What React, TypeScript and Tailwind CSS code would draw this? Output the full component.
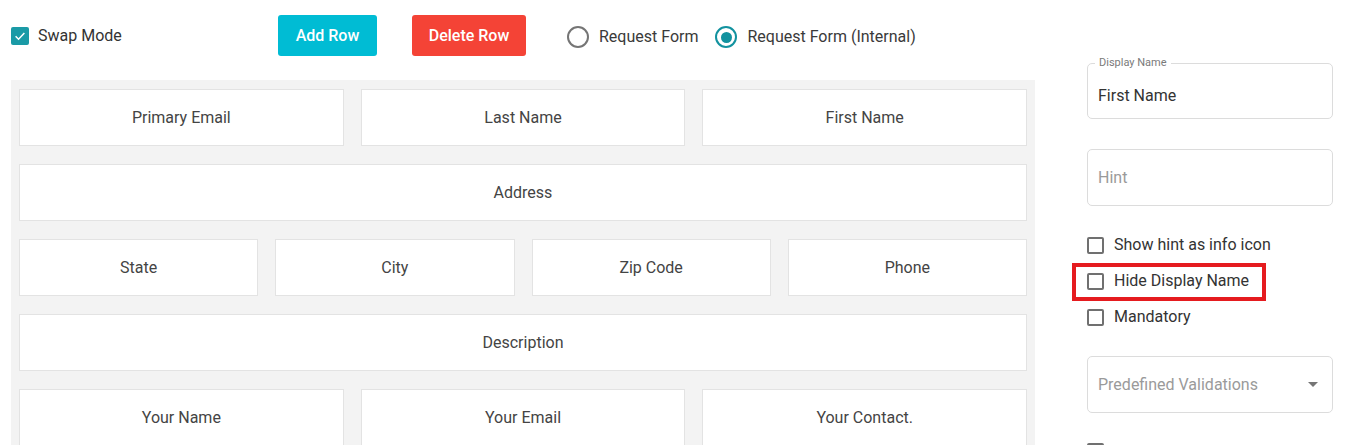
import React from "react";

const rows: string[][] = [
  ["Primary Email", "Last Name", "First Name"],
  ["Address"],
  ["State", "City", "Zip Code", "Phone"],
  ["Description"],
  ["Your Name", "Your Email", "Your Contact."],
];

function Box({ checked = false }: { checked?: boolean }) {
  if (checked) {
    return (
      <span className="flex h-[18px] w-[18px] items-center justify-center rounded-[2px] bg-[#1a9aa6]">
        <svg width="14" height="14" viewBox="0 0 24 24" fill="none" stroke="#fff" strokeWidth="2.6">
          <path d="M4.5 12.5l5 5L19.5 7" />
        </svg>
      </span>
    );
  }
  return <span className="h-[17px] w-[17px] shrink-0 rounded-[2px] border-2 border-[#707070] bg-white" />;
}

function Radio({ checked = false, label }: { checked?: boolean; label: string }) {
  return (
    <label className="flex items-center gap-[10px]">
      <span
        className={
          "flex h-[22px] w-[22px] items-center justify-center rounded-full border-2 " +
          (checked ? "border-[#12929f]" : "border-[#757575]")
        }
      >
        {checked && <span className="h-[11px] w-[11px] rounded-full bg-[#12929f]" />}
      </span>
      <span className="text-[16px] text-[#3a3a3a]">{label}</span>
    </label>
  );
}

function CheckRow({ label }: { label: string }) {
  return (
    <div className="flex h-[36px] shrink-0 items-center gap-[10px]">
      <Box />
      <span className="text-[16px] text-[#333]">{label}</span>
    </div>
  );
}

export default function App() {
  return (
    <div
      className="flex h-[445px] w-full overflow-hidden bg-white pl-[11px]"
      style={{ fontFamily: "Roboto, 'Liberation Sans', sans-serif" }}
    >
      {/* Left: toolbar + form grid */}
      <div className="flex w-[1024px] shrink-0 flex-col">
        <div className="mt-[15px] mb-[24px] flex h-[41px] shrink-0 items-center">
          <div className="flex w-[267px] items-center gap-[9px]">
            <Box checked />
            <span className="text-[16px] text-[#333]">Swap Mode</span>
          </div>
          <button className="flex h-[41px] w-[99px] items-center justify-center rounded-[3px] bg-[#00bcd4] text-[16px] font-medium text-white">
            Add Row
          </button>
          <button className="ml-[35px] flex h-[41px] w-[114px] items-center justify-center rounded-[3px] bg-[#f44336] text-[16px] font-medium text-white">
            Delete Row
          </button>
          <div className="ml-[41px] mt-[3px] flex items-center gap-[17px]">
            <Radio label="Request Form" />
            <Radio checked label="Request Form (Internal)" />
          </div>
        </div>

        <div className="flex shrink-0 flex-col gap-[18px] bg-[#f3f3f3] px-[8px] pt-[9px] pb-[20px]">
          {rows.map((row, i) => (
            <div key={i} className="flex gap-[17px]">
              {row.map((label) => (
                <div
                  key={label}
                  className="flex h-[57px] flex-1 items-center justify-center border border-[#e3e3e3] bg-white text-[16px] text-[#444]"
                >
                  {label}
                </div>
              ))}
            </div>
          ))}
        </div>
      </div>

      {/* Right: field settings */}
      <div className="ml-[52px] flex w-[246px] shrink-0 flex-col pt-[63px]">
        <div className="relative h-[56px] shrink-0 rounded-[5px] border border-[#dcdcdc]">
          <span className="absolute -top-[8px] left-[7px] bg-white px-[4px] text-[11px] leading-[14px] text-[#7a7a7a]">
            Display Name
          </span>
          <div className="flex h-full items-center px-[10px] pt-[9px] text-[16px] text-[#333]">First Name</div>
        </div>

        <div className="mt-[30px] flex h-[57px] shrink-0 items-center rounded-[5px] border border-[#dcdcdc] px-[10px] text-[16px] text-[#9a9a9a]">
          Hint
        </div>

        <div className="mt-[21px] flex shrink-0 flex-col">
          <CheckRow label="Show hint as info icon" />
          <div className="relative">
            <CheckRow label="Hide Display Name" />
            <div className="absolute -left-[15px] top-0 h-[38px] w-[194px] border-4 border-[#e51b1f]" />
          </div>
          <CheckRow label="Mandatory" />
        </div>

        <div className="mt-[21px] flex h-[57px] shrink-0 items-center justify-between rounded-[5px] border border-[#dcdcdc] pl-[10px] pr-[14px]">
          <span className="text-[16px] text-[#9a9a9a]">Predefined Validations</span>
          <svg width="10" height="5" viewBox="0 0 10 5">
            <path d="M0 0h10L5 5z" fill="#757575" />
          </svg>
        </div>

        {/* next option row, only its checkbox edge shows above the fold */}
        <div className="mt-[30px] flex shrink-0">
          <Box />
        </div>
      </div>
    </div>
  );
}
